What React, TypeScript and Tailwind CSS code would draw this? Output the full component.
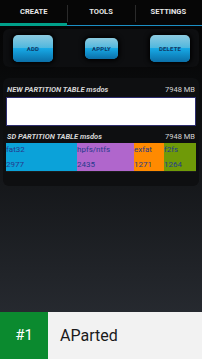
// App.tsx
const TABS = ['CREATE', 'TOOLS', 'SETTINGS']

const PARTS = [
  { name: 'fat32', size: 2977, cls: 'bg-[#0ba2d9] w-[71px]' },
  { name: 'hpfs/ntfs', size: 2435, cls: 'bg-[#b066cc] w-[57px]' },
  { name: 'exfat', size: 1271, cls: 'bg-[#ff8a00] w-[30px]' },
  { name: 'f2fs', size: 1264, cls: 'bg-[#6f9a08] flex-1' },
]

function GlossButton({ label, small }: { label: string; small?: boolean }) {
  return (
    <div
      className={`relative flex items-center justify-center rounded-[5px] overflow-hidden shadow-[0_0_4px_2px_rgba(0,0,0,0.9)] bg-gradient-to-b from-[#8ccbe0] via-[#4ab6de] to-[#0a84c0] ${
        small ? 'w-[33px] h-[21px]' : 'w-[40px] h-[27px]'
      }`}
    >
      <div className="absolute inset-x-0 bottom-0 h-1/2 bg-gradient-to-b from-[#18abe8] to-[#0b6fa8]" />
      <span className="relative text-[6px] font-bold text-[#123a66] tracking-[0.2px]">{label}</span>
    </div>
  )
}

export default function App() {
  return (
    <div className="w-[202px] h-[359px] flex flex-col bg-gradient-to-b from-[#030303] via-[#15171a] to-[#2c3037] font-['Roboto',sans-serif] overflow-hidden">
      {/* Onglets */}
      <div className="relative h-[26px] bg-[#060606] flex shrink-0">
        {TABS.map((t, i) => (
          <div key={t} className="relative flex-1 flex items-center justify-center pb-[2px]">
            <span className="text-[7.5px] font-bold text-[#e8e8e8]">{t}</span>
            {i > 0 && <div className="absolute left-0 top-[5px] h-[17px] w-px bg-[#2a2a2a]" />}
          </div>
        ))}
        <div className="absolute left-0 right-0 bottom-0 h-px bg-[#1b8fc4]" />
        <div className="absolute left-0 bottom-0 w-[67px] h-[3px] bg-[#00a08a]" />
      </div>

      {/* Boutons */}
      <div className="mx-[3px] mt-[3px] h-[38px] rounded-[6px] bg-[#0d0e10] flex items-center pl-[10px] pr-[9px] justify-between">
        <GlossButton label="ADD" />
        <GlossButton label="APPLY" small />
        <GlossButton label="DELETE" />
      </div>

      {/* Tables de partitions */}
      <div className="mx-[3px] mt-[11px] rounded-[6px] bg-[#0e0f11] px-[3px] pt-[8px] pb-[14px]">
        <div className="flex justify-between items-end px-[1px] text-[7.5px] text-[#d6d6d6] leading-none">
          <span className="font-bold italic">NEW PARTITION TABLE msdos</span>
          <span>7948 MB</span>
        </div>
        <div className="mt-[3px] h-[29px] bg-white border border-[#2d2d6e]" />

        <div className="mt-[7px] flex justify-between items-end px-[1px] text-[7.5px] text-[#d6d6d6] leading-none">
          <span className="font-bold italic">SD PARTITION TABLE msdos</span>
          <span>7948 MB</span>
        </div>
        <div className="mt-[3px] h-[29px] flex border-b border-[#1c1c1c]">
          {PARTS.map((p) => (
            <div key={p.name} className={`${p.cls} flex flex-col justify-between pt-[3px] pb-[2px] text-[8px] leading-none text-[#263a8c]`}>
              <span>{p.name}</span>
              <span>{p.size}</span>
            </div>
          ))}
        </div>
      </div>

      <div className="flex-1" />

      {/* Bandeau */}
      <div className="h-[47px] flex shrink-0 bg-[#f2f2f2]">
        <div className="w-[48px] bg-[#0b8a2f] flex items-center justify-center">
          <span className="text-[15px] text-white">#1</span>
        </div>
        <div className="flex items-center pl-[12px]">
          <span className="text-[16px] text-[#1a1a1a]">AParted</span>
        </div>
      </div>
    </div>
  )
}
